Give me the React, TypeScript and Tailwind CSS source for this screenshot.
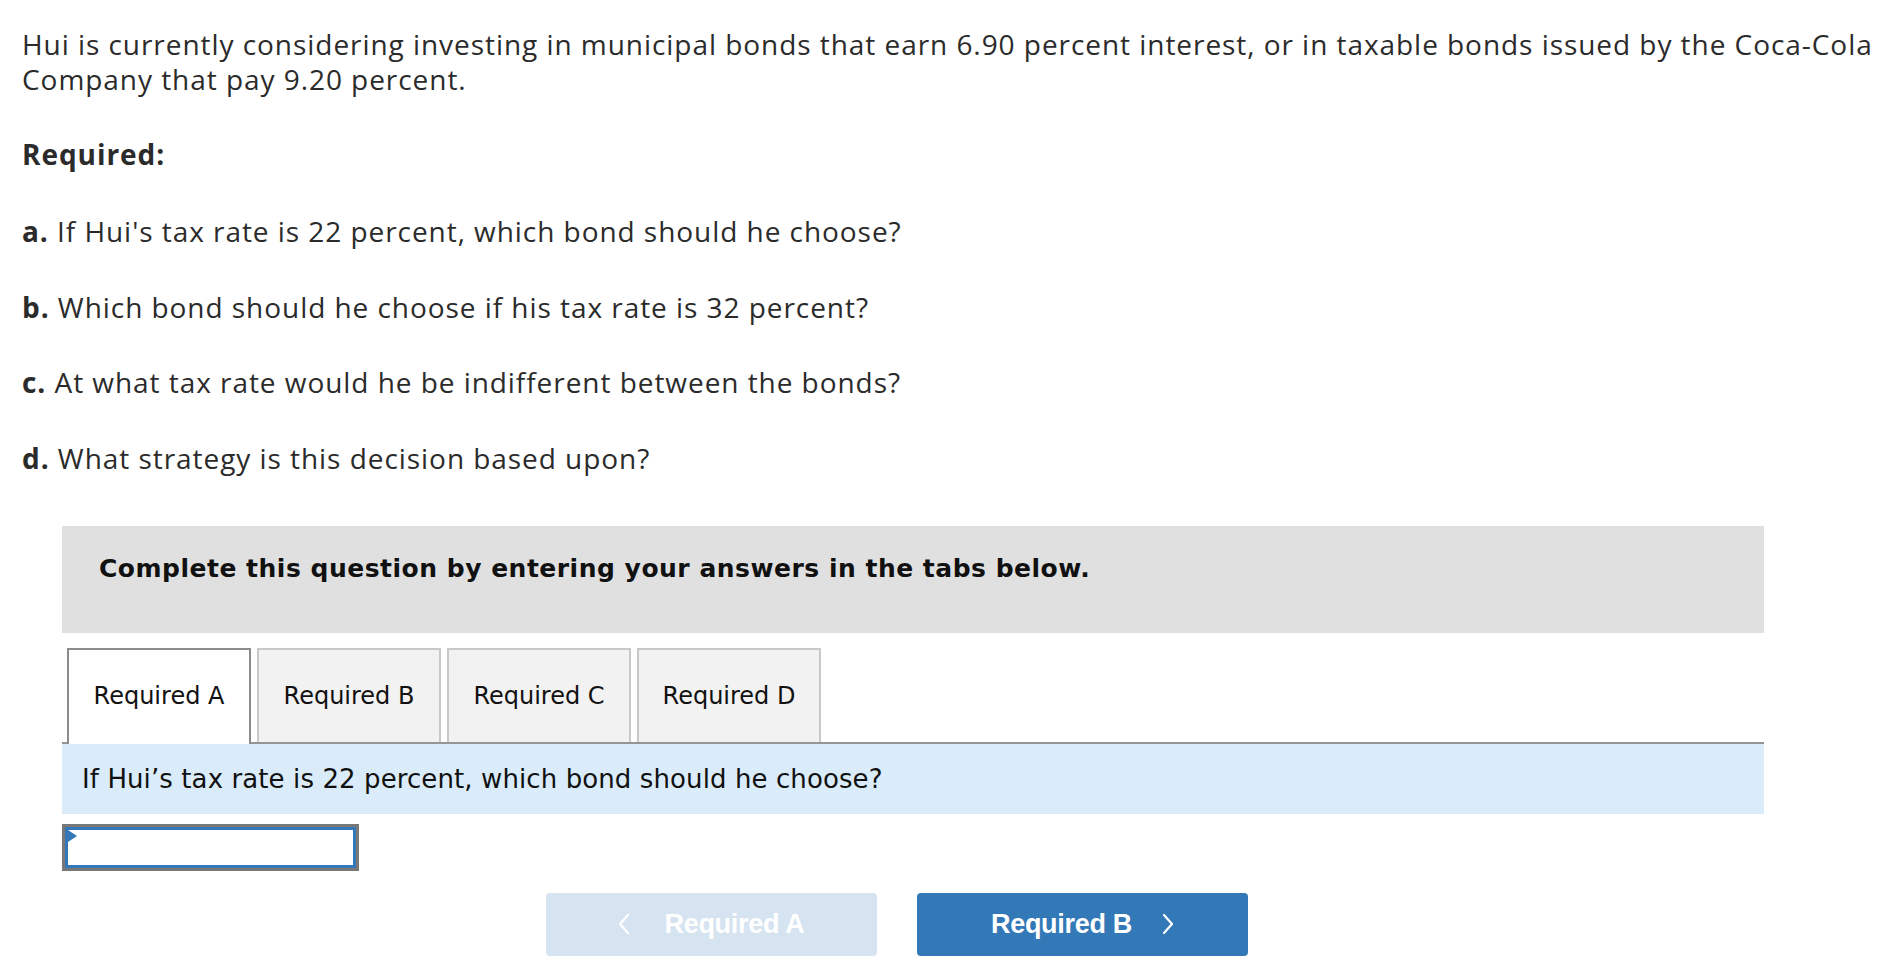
import React from "react";

const parts = [
  { label: "a.", text: "If Hui's tax rate is 22 percent, which bond should he choose?" },
  { label: "b.", text: "Which bond should he choose if his tax rate is 32 percent?" },
  { label: "c.", text: "At what tax rate would he be indifferent between the bonds?" },
  { label: "d.", text: "What strategy is this decision based upon?" },
];

const tabs = ["Required A", "Required B", "Required C", "Required D"];

function Chevron({ dir }: { dir: "left" | "right" }) {
  return (
    <svg width="12" height="22" viewBox="0 0 12 22" fill="none">
      <path
        d={dir === "left" ? "M10 2 L2 11 L10 20" : "M2 2 L10 11 L2 20"}
        stroke="white"
        strokeWidth="2.2"
        strokeLinecap="round"
        strokeLinejoin="round"
      />
    </svg>
  );
}

export default function App() {
  return (
    <div className="min-h-screen bg-white text-[#2b2b2b]">
      <div className="pl-[22px] pr-[20px] pt-[27px] font-['Open_Sans',sans-serif] text-[28px] leading-[35px] tracking-[0.95px]">
        <p className="max-w-[1862px]">
          Hui is currently considering investing in municipal bonds that earn 6.90 percent interest, or in
          taxable bonds issued by the Coca-Cola Company that pay 9.20 percent.
        </p>
        <p className="mt-[40px] font-bold">Required:</p>
        <div className="mt-[42px] flex flex-col gap-[40.5px]">
          {parts.map((p) => (
            <p key={p.label}>
              <span className="font-bold">{p.label}</span> {p.text}
            </p>
          ))}
        </div>
      </div>

      <div className="ml-[62px] mt-[50px] w-[1702px] font-['DejaVu_Sans',Verdana,sans-serif] text-[#111]">
        <div className="h-[107px] bg-[#e0e0e0] pl-[37px] pt-[29px] text-[25px] font-bold leading-[28px] tracking-[0.5px]">
          Complete this question by entering your answers in the tabs below.
        </div>

        <div className="mt-[15px] flex border-b-2 border-[#959595]">
          <div className="ml-[5px] flex gap-[6px]">
            {tabs.map((t, i) => (
              <div
                key={t}
                className={
                  i === 0
                    ? "-mb-[2px] flex h-[96px] w-[184px] items-center justify-center border-2 border-b-0 border-[#8c8c8c] bg-white pb-[2px] text-[24px]"
                    : "flex h-[94px] w-[184px] items-center justify-center border-2 border-b-0 border-[#c8c8c8] bg-[#f2f2f2] text-[24px]"
                }
              >
                {t}
              </div>
            ))}
          </div>
        </div>

        <div className="flex h-[70px] items-center bg-[#daecf9] pl-[20px] pt-[2px] text-[26px] tracking-[0.1px]">
          If Hui’s tax rate is 22 percent, which bond should he choose?
        </div>

        <div className="relative mt-[10px] h-[47px] w-[297px] border-[3px] border-[#787878]">
          <div className="h-full w-full border-[3px] border-[#3377b8] bg-white" />
          <div className="absolute left-[3px] top-[3px] h-0 w-0 border-y-[6px] border-l-[9px] border-y-transparent border-l-[#3377b8]" />
        </div>

        <div className="mt-[22px] flex gap-[40px] pl-[484px] font-['Liberation_Sans',Arial,sans-serif] text-[27px] font-bold text-white">
          <button className="flex h-[63px] w-[331px] items-center justify-center gap-[34px] rounded-[4px] bg-[#d6e4f1]">
            <Chevron dir="left" />
            <span className="tracking-[-0.3px]">Required A</span>
          </button>
          <button className="flex h-[63px] w-[331px] items-center justify-center gap-[30px] rounded-[4px] bg-[#3378b7]">
            <span className="tracking-[-0.3px]">Required B</span>
            <Chevron dir="right" />
          </button>
        </div>
      </div>
    </div>
  );
}
